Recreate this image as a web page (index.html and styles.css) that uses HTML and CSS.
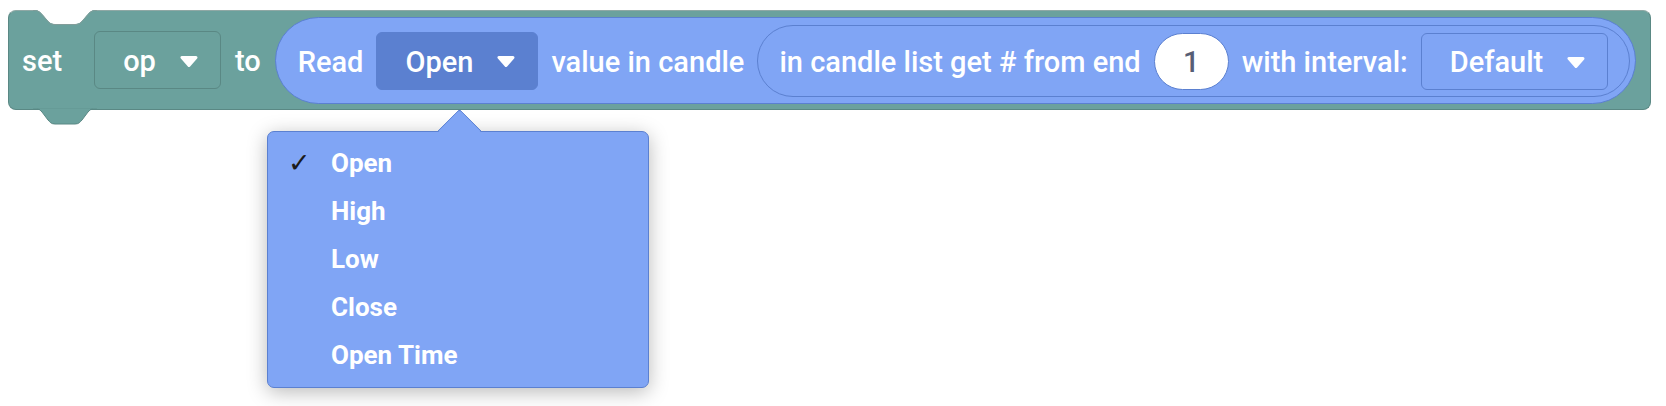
FILE: index.html
```html
<!DOCTYPE html>
<html>
<head>
<meta charset="utf-8">
<link rel="stylesheet" href="styles.css">
</head>
<body>
<div class="workspace">
  <div class="block-set">
    <span class="label">set</span>
    <span class="dd dd-green dd-first"><span class="dd-text">op</span><svg class="arrow" width="18" height="11" viewBox="0 0 18 11"><polygon points="2,1.5 16,1.5 9,9.5" fill="#fff" stroke="#fff" stroke-width="3" stroke-linejoin="round"/></svg></span>
    <span class="label">to</span>
    <div class="block-read">
      <span class="label">Read</span>
      <span class="dd dd-dark"><span class="dd-text">Open</span><svg class="arrow" width="18" height="11" viewBox="0 0 18 11"><polygon points="2,1.5 16,1.5 9,9.5" fill="#fff" stroke="#fff" stroke-width="3" stroke-linejoin="round"/></svg></span>
      <span class="label">value in candle</span>
      <div class="block-list">
        <span class="label">in candle list get # from end</span>
        <span class="num">1</span>
        <span class="label">with interval:</span>
        <span class="dd dd-outline"><span class="dd-text">Default</span><svg class="arrow" width="18" height="11" viewBox="0 0 18 11"><polygon points="2,1.5 16,1.5 9,9.5" fill="#fff" stroke="#fff" stroke-width="3" stroke-linejoin="round"/></svg></span>
      </div>
    </div>
  </div>
  <div class="menu">
    <div class="menu-pointer"></div>
    <div class="menu-item"><span class="check">✓</span><span class="item-text">Open</span></div>
    <div class="menu-item"><span class="check"></span><span class="item-text">High</span></div>
    <div class="menu-item"><span class="check"></span><span class="item-text">Low</span></div>
    <div class="menu-item"><span class="check"></span><span class="item-text">Close</span></div>
    <div class="menu-item"><span class="check"></span><span class="item-text">Open Time</span></div>
  </div>
</div>
</body>
</html>
```

FILE: styles.css
```css
html, body {
  margin: 0;
  padding: 0;
  background: #ffffff;
}

.workspace {
  position: relative;
  width: 1666px;
  height: 406px;
  padding: 10px 0 0 8px;
  box-sizing: border-box;
  font-family: Roboto, "Noto Sans", sans-serif;
}

.block-set {
  position: relative;
  display: inline-flex;
  align-items: center;
  gap: 14px;
  box-sizing: border-box;
  height: 100px;
  padding: 0 14px 0 13px;
  background: #6ba19d;
  border: 1px solid #5a8884;
  border-top-color: #8fa8a5;
  border-radius: 8px;
}

.block-set::before {
  content: "";
  position: absolute;
  left: 24px;
  top: -1px;
  width: 64px;
  height: 16px;
  background: url("data:image/svg+xml,%3Csvg xmlns='http://www.w3.org/2000/svg' width='64' height='16'%3E%3Cpath d='M0 0 L1 0 C5 0 6 1 9 4 L15 11 C17 13 18 14 22 14 L42 14 C46 14 47 13 49 11 L55 4 C58 1 59 0 63 0 L64 0 L64 -1 L0 -1 Z' fill='%23ffffff'/%3E%3Cpath d='M0 0 L1 0 C5 0 6 1 9 4 L15 11 C17 13 18 14 22 14 L42 14 C46 14 47 13 49 11 L55 4 C58 1 59 0 63 0 L64 0 L64 16 L0 16 Z' fill='%236ba19d'/%3E%3Cpath d='M0 0.5 L1 0.5 C5 0.5 6 1.5 9 4.5 L15 11.5 C17 13.5 18 14.5 22 14.5 L42 14.5 C46 14.5 47 13.5 49 11.5 L55 4.5 C58 1.5 59 0.5 63 0.5 L64 0.5' fill='none' stroke='%23839d9a' stroke-width='1'/%3E%3C/svg%3E") no-repeat;
}

.block-set::after {
  content: "";
  position: absolute;
  left: 24px;
  top: calc(100% - 1px);
  width: 64px;
  height: 17px;
  background: url("data:image/svg+xml,%3Csvg xmlns='http://www.w3.org/2000/svg' width='64' height='17'%3E%3Cpath d='M0 0 L1 0 C5 0 6 1 9 4 L15 12 C17 14 18 16 22 16 L42 16 C46 16 47 14 49 12 L55 4 C58 1 59 0 63 0 L64 0 Z' fill='%236ba19d' stroke='%235a8884' stroke-width='1'/%3E%3Cpath d='M0 0 L64 0' stroke='%236ba19d' stroke-width='1.2'/%3E%3C/svg%3E") no-repeat;
}

.label {
  font-size: 29px;
  font-weight: 500;
  color: #ffffff;
  white-space: nowrap;
  line-height: 34px;
  padding-top: 2px;
}

.dd {
  display: inline-flex;
  align-items: center;
  gap: 24px;
  box-sizing: border-box;
  height: 58px;
  padding: 0 22px 0 28px;
  border-radius: 6px;
  border: 1px solid transparent;
}

.dd-first {
  margin-left: 18px;
}

.dd-text {
  font-size: 29px;
  font-weight: 500;
  color: #ffffff;
  line-height: 34px;
  padding-top: 2px;
  white-space: nowrap;
}

.arrow {
  display: block;
  margin-top: 2px;
}

.dd-green {
  background: #6ba19d;
  border-color: #5a8884;
}

.dd-dark {
  background: #5b80d0;
  border-color: #5b80d0;
}

.dd-outline {
  background: #80a5f5;
  border-color: #5b80d0;
  height: 57px;
}

.block-read {
  display: flex;
  align-items: center;
  gap: 13px;
  box-sizing: border-box;
  height: 87px;
  padding: 0 5px 0 22px;
  margin-top: 1px;
  background: #80a5f5;
  border: 1.5px solid #5b80d0;
  border-radius: 44px;
}

.block-list {
  display: flex;
  align-items: center;
  gap: 13px;
  box-sizing: border-box;
  height: 72px;
  padding: 0 21px 0 21px;
  margin-top: 1px;
  background: #80a5f5;
  border: 1.5px solid #5b80d0;
  border-radius: 36px;
}

.num {
  display: inline-flex;
  align-items: center;
  justify-content: center;
  box-sizing: border-box;
  width: 75px;
  height: 57px;
  background: #ffffff;
  border: 1.5px solid #5b80d0;
  border-radius: 29px;
  font-size: 29px;
  font-weight: 500;
  color: #575e75;
  padding-top: 2px;
}

.menu {
  position: absolute;
  left: 267px;
  top: 131px;
  width: 382px;
  height: 257px;
  box-sizing: border-box;
  padding: 7px 0 0 0;
  background: #80a5f5;
  border: 1.5px solid #5b80d0;
  border-radius: 7px;
  box-shadow: 0 4px 20px rgba(0, 0, 0, 0.28);
}

.menu-pointer {
  position: absolute;
  left: 176px;
  top: -17px;
  width: 31px;
  height: 31px;
  box-sizing: border-box;
  background: #80a5f5;
  border-top: 1.5px solid #5b80d0;
  border-left: 1.5px solid #5b80d0;
  border-top-left-radius: 4px;
  transform: rotate(45deg);
}

.menu-item {
  position: relative;
  display: flex;
  align-items: center;
  height: 48px;
  font-size: 26px;
  font-weight: 700;
  color: #ffffff;
  white-space: nowrap;
}

.check {
  display: inline-block;
  width: 63px;
  padding-left: 20px;
  box-sizing: border-box;
  font-family: "DejaVu Sans", sans-serif;
  font-size: 27px;
  font-weight: 700;
  line-height: 30px;
  color: #1b1b1b;
}

.item-text {
  line-height: 30px;
}
```
